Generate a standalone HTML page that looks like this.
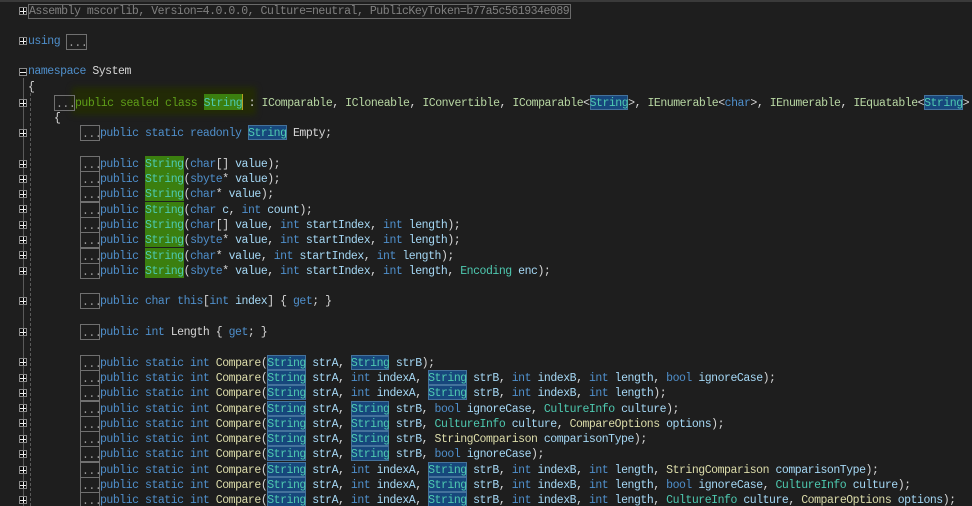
<!DOCTYPE html>
<html><head><meta charset="utf-8"><style>
html,body{margin:0;padding:0;background:#1e1e1e}
#r{position:relative;width:972px;height:506px;overflow:hidden;background:#1e1e1e;font-family:"Liberation Mono",monospace;font-size:11.5px;letter-spacing:-.47px;color:#d6d6d6;filter:blur(.3px)}
.l{position:absolute;left:100px;height:15px;line-height:17px;white-space:pre}
.k{color:#4f8fcb}.i{color:#b8d7a3}.t{color:#4ec9b0}.p{color:#a5d8f5}.m{color:#dcdcaa}
.s{display:inline-block;height:15px;vertical-align:top;color:#4ec9b0;background:#17477c;box-shadow:inset 0 0 0 1px #44729c}
.g{display:inline-block;height:15px;vertical-align:top;color:#4ec9b0;background:#3b7f0f}
.b{position:absolute;left:80px;width:18px;height:14px;border:1px solid #707070;color:#9a9a9a;line-height:17px;text-align:left;text-indent:1px;white-space:pre}
.o{position:absolute;left:19px;width:6px;height:6px;border:1px solid #8a8a8a;background:#0c0c0c}
.o:before{content:"";position:absolute;left:0;top:2.5px;width:6px;height:1px;background:#eee}
.o:after{content:"";position:absolute;left:2.5px;top:0;width:1px;height:6px;background:#eee}
.n:after{display:none}
</style></head><body><div id="r">
<div style="position:absolute;left:0;top:0;width:972px;height:2px;background:#3a3a3a"></div>
<div style="position:absolute;left:23px;top:78px;width:1px;height:428px;background:#5a5a5a"></div>
<div style="position:absolute;left:30px;top:93px;width:1px;height:413px;background:repeating-linear-gradient(#5a5a5a 0 3px,transparent 3px 5px)"></div>
<div style="position:absolute;left:72px;top:87px;width:184px;height:28px;background:#222a06;filter:blur(3px)"></div>

<div class="o" style="top:7px"></div>
<div class="o" style="top:37px"></div>
<div class="o n" style="top:68px"></div>
<div class="o" style="top:99px"></div>
<div class="o" style="top:129px"></div>
<div class="o" style="top:160px"></div><div class="o" style="top:175px"></div><div class="o" style="top:190px"></div><div class="o" style="top:205px"></div><div class="o" style="top:221px"></div><div class="o" style="top:236px"></div><div class="o" style="top:251px"></div><div class="o" style="top:267px"></div>
<div class="o" style="top:297px"></div>
<div class="o" style="top:328px"></div>
<div class="o" style="top:358px"></div><div class="o" style="top:374px"></div><div class="o" style="top:389px"></div><div class="o" style="top:404px"></div><div class="o" style="top:419px"></div><div class="o" style="top:435px"></div><div class="o" style="top:450px"></div><div class="o" style="top:466px"></div><div class="o" style="top:481px"></div><div class="o" style="top:496px"></div>

<div class="l" style="left:28px;top:4px;height:13px;line-height:14px;padding-right:1px;border:1px solid #6a6a6a;color:#808080">Assembly mscorlib, Version=4.0.0.0, Culture=neutral, PublicKeyToken=b77a5c561934e089</div>
<div class="l" style="left:28px;top:33px"><span class="k">using</span></div>
<div class="b" style="left:66px;top:34px;width:19px">...</div>
<div class="l" style="left:28px;top:63px"><span class="k">namespace</span> System</div>
<div class="l" style="left:28px;top:79px">{</div>
<div class="b" style="left:54px;top:95px;width:19px">...</div>
<div class="l" style="left:75px;top:95px"><span style="color:#5f9e18">public sealed class </span><span class="g" style="height:16px;position:relative;top:-1px;line-height:19px;border-right:1px solid #b5a020;margin-right:-1px">String</span> : <span class="i">IComparable</span>, <span class="i">ICloneable</span>, <span class="i">IConvertible</span>, <span class="i">IComparable</span>&lt;<span class="s">String</span>&gt;, <span class="i">IEnumerable</span>&lt;<span class="k">char</span>&gt;, <span class="i">IEnumerable</span>, <span class="i">IEquatable</span>&lt;<span class="s">String</span>&gt;</div>
<div class="l" style="left:54px;top:110px">{</div>

<div class="b" style="top:125px">...</div><div class="l" style="top:125px"><span class="k">public static readonly</span> <span class="s">String</span> Empty;</div>

<div class="b" style="top:156px">...</div><div class="l" style="top:156px"><span class="k">public</span> <span class="g">String</span>(<span class="k">char</span>[] <span class="p">value</span>);</div>
<div class="b" style="top:171px">...</div><div class="l" style="top:171px"><span class="k">public</span> <span class="g">String</span>(<span class="k">sbyte</span>* <span class="p">value</span>);</div>
<div class="b" style="top:186px">...</div><div class="l" style="top:186px"><span class="k">public</span> <span class="g">String</span>(<span class="k">char</span>* <span class="p">value</span>);</div>
<div class="b" style="top:202px">...</div><div class="l" style="top:202px"><span class="k">public</span> <span class="g">String</span>(<span class="k">char</span> <span class="p">c</span>, <span class="k">int</span> <span class="p">count</span>);</div>
<div class="b" style="top:217px">...</div><div class="l" style="top:217px"><span class="k">public</span> <span class="g">String</span>(<span class="k">char</span>[] <span class="p">value</span>, <span class="k">int</span> <span class="p">startIndex</span>, <span class="k">int</span> <span class="p">length</span>);</div>
<div class="b" style="top:232px">...</div><div class="l" style="top:232px"><span class="k">public</span> <span class="g">String</span>(<span class="k">sbyte</span>* <span class="p">value</span>, <span class="k">int</span> <span class="p">startIndex</span>, <span class="k">int</span> <span class="p">length</span>);</div>
<div class="b" style="top:248px">...</div><div class="l" style="top:248px"><span class="k">public</span> <span class="g">String</span>(<span class="k">char</span>* <span class="p">value</span>, <span class="k">int</span> <span class="p">startIndex</span>, <span class="k">int</span> <span class="p">length</span>);</div>
<div class="b" style="top:263px">...</div><div class="l" style="top:263px"><span class="k">public</span> <span class="g">String</span>(<span class="k">sbyte</span>* <span class="p">value</span>, <span class="k">int</span> <span class="p">startIndex</span>, <span class="k">int</span> <span class="p">length</span>, <span class="t">Encoding</span> <span class="p">enc</span>);</div>

<div class="b" style="top:293px">...</div><div class="l" style="top:293px"><span class="k">public char this</span>[<span class="k">int</span> <span class="p">index</span>] { <span class="k">get</span>; }</div>
<div class="b" style="top:324px">...</div><div class="l" style="top:324px"><span class="k">public int</span> Length { <span class="k">get</span>; }</div>

<div class="b" style="top:355px">...</div><div class="l" style="top:355px"><span class="k">public static int</span> <span class="m">Compare</span>(<span class="s">String</span> <span class="p">strA</span>, <span class="s">String</span> <span class="p">strB</span>);</div>
<div class="b" style="top:370px">...</div><div class="l" style="top:370px"><span class="k">public static int</span> <span class="m">Compare</span>(<span class="s">String</span> <span class="p">strA</span>, <span class="k">int</span> <span class="p">indexA</span>, <span class="s">String</span> <span class="p">strB</span>, <span class="k">int</span> <span class="p">indexB</span>, <span class="k">int</span> <span class="p">length</span>, <span class="k">bool</span> <span class="p">ignoreCase</span>);</div>
<div class="b" style="top:385px">...</div><div class="l" style="top:385px"><span class="k">public static int</span> <span class="m">Compare</span>(<span class="s">String</span> <span class="p">strA</span>, <span class="k">int</span> <span class="p">indexA</span>, <span class="s">String</span> <span class="p">strB</span>, <span class="k">int</span> <span class="p">indexB</span>, <span class="k">int</span> <span class="p">length</span>);</div>
<div class="b" style="top:401px">...</div><div class="l" style="top:401px"><span class="k">public static int</span> <span class="m">Compare</span>(<span class="s">String</span> <span class="p">strA</span>, <span class="s">String</span> <span class="p">strB</span>, <span class="k">bool</span> <span class="p">ignoreCase</span>, <span class="t">CultureInfo</span> <span class="p">culture</span>);</div>
<div class="b" style="top:416px">...</div><div class="l" style="top:416px"><span class="k">public static int</span> <span class="m">Compare</span>(<span class="s">String</span> <span class="p">strA</span>, <span class="s">String</span> <span class="p">strB</span>, <span class="t">CultureInfo</span> <span class="p">culture</span>, <span class="m">CompareOptions</span> <span class="p">options</span>);</div>
<div class="b" style="top:431px">...</div><div class="l" style="top:431px"><span class="k">public static int</span> <span class="m">Compare</span>(<span class="s">String</span> <span class="p">strA</span>, <span class="s">String</span> <span class="p">strB</span>, <span class="m">StringComparison</span> <span class="p">comparisonType</span>);</div>
<div class="b" style="top:446px">...</div><div class="l" style="top:446px"><span class="k">public static int</span> <span class="m">Compare</span>(<span class="s">String</span> <span class="p">strA</span>, <span class="s">String</span> <span class="p">strB</span>, <span class="k">bool</span> <span class="p">ignoreCase</span>);</div>
<div class="b" style="top:462px">...</div><div class="l" style="top:462px"><span class="k">public static int</span> <span class="m">Compare</span>(<span class="s">String</span> <span class="p">strA</span>, <span class="k">int</span> <span class="p">indexA</span>, <span class="s">String</span> <span class="p">strB</span>, <span class="k">int</span> <span class="p">indexB</span>, <span class="k">int</span> <span class="p">length</span>, <span class="m">StringComparison</span> <span class="p">comparisonType</span>);</div>
<div class="b" style="top:477px">...</div><div class="l" style="top:477px"><span class="k">public static int</span> <span class="m">Compare</span>(<span class="s">String</span> <span class="p">strA</span>, <span class="k">int</span> <span class="p">indexA</span>, <span class="s">String</span> <span class="p">strB</span>, <span class="k">int</span> <span class="p">indexB</span>, <span class="k">int</span> <span class="p">length</span>, <span class="k">bool</span> <span class="p">ignoreCase</span>, <span class="t">CultureInfo</span> <span class="p">culture</span>);</div>
<div class="b" style="top:492px">...</div><div class="l" style="top:492px"><span class="k">public static int</span> <span class="m">Compare</span>(<span class="s">String</span> <span class="p">strA</span>, <span class="k">int</span> <span class="p">indexA</span>, <span class="s">String</span> <span class="p">strB</span>, <span class="k">int</span> <span class="p">indexB</span>, <span class="k">int</span> <span class="p">length</span>, <span class="t">CultureInfo</span> <span class="p">culture</span>, <span class="m">CompareOptions</span> <span class="p">options</span>);</div>
</div></body></html>
